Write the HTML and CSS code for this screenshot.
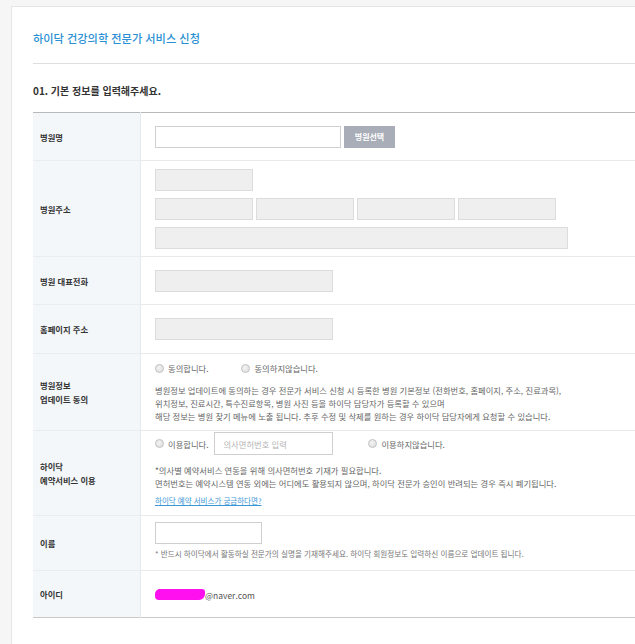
FILE: index.html
```html
<!DOCTYPE html>
<html lang="ko">
<head>
  <meta charset="UTF-8">
  <meta name="viewport" content="width=device-width, initial-scale=1.0">
  <title>하이닥 건강의학 전문가 서비스 신청</title>
  <link rel="stylesheet" href="styles.css">
</head>
<body>
  <div class="wrap">
    <div class="card">
      <h1 class="title">하이닥 건강의학 전문가 서비스 신청</h1>
      <hr class="line">
      <h2 class="step">01. 기본 정보를 입력해주세요.</h2>

      <table class="form">
        <tr class="r-name">
          <th>병원명</th>
          <td>
            <div class="inline">
              <input type="text" class="inp w-186">
              <button class="btn">병원선택</button>
            </div>
          </td>
        </tr>
        <tr class="r-addr">
          <th>병원주소</th>
          <td>
            <div class="addr">
              <span class="box w-98"></span>
              <div class="inline gap3">
                <span class="box w-98"></span>
                <span class="box w-98"></span>
                <span class="box w-98"></span>
                <span class="box w-98"></span>
              </div>
              <span class="box w-413"></span>
            </div>
          </td>
        </tr>
        <tr class="r-phone">
          <th>병원 대표전화</th>
          <td><span class="box w-178"></span></td>
        </tr>
        <tr class="r-home">
          <th>홈페이지 주소</th>
          <td><span class="box w-178"></span></td>
        </tr>
        <tr class="r-agree">
          <th>병원정보<br>업데이트 동의</th>
          <td>
            <div class="radios">
              <label class="radio"><span class="dot"></span>동의합니다.</label>
              <label class="radio"><span class="dot"></span>동의하지않습니다.</label>
            </div>
            <p class="desc">병원정보 업데이트에 동의하는 경우 전문가 서비스 신청 시 등록한 병원 기본정보 (전화번호, 홈페이지, 주소, 진료과목),<br>위치정보, 진료시간, 특수진료항목, 병원 사진 등을 하이닥 담당자가 등록할 수 있으며<br>해당 정보는 병원 찾기 메뉴에 노출 됩니다. 추후 수정 및 삭제를 원하는 경우 하이닥 담당자에게 요청할 수 있습니다.</p>
          </td>
        </tr>
        <tr class="r-resv">
          <th>하이닥<br>예약서비스 이용</th>
          <td>
            <div class="radios">
              <label class="radio"><span class="dot"></span>이용합니다.</label>
              <input type="text" class="inp lic" placeholder="의사면허번호 입력">
              <label class="radio"><span class="dot"></span>이용하지않습니다.</label>
            </div>
            <p class="desc">*의사별 예약서비스 연동을 위해 의사면허번호 기재가 필요합니다.<br>면허번호는 예약시스템 연동 외에는 어디에도 활용되지 않으며, 하이닥 전문가 승인이 반려되는 경우 즉시 폐기됩니다.</p>
            <a href="#" class="more">하이닥 예약 서비스가 궁금하다면?</a>
          </td>
        </tr>
        <tr class="r-user">
          <th>이름</th>
          <td>
            <input type="text" class="inp w-107">
            <p class="note">* 반드시 하이닥에서 활동하실 전문가의 실명을 기재해주세요. 하이닥 회원정보도 입력하신 이름으로 업데이트 됩니다.</p>
          </td>
        </tr>
        <tr class="r-id">
          <th>아이디</th>
          <td><span class="mask"></span><span class="mail">@naver.com</span></td>
        </tr>
      </table>
    </div>
  </div>
</body>
</html>
```

FILE: styles.css
```css
body { margin:0; background:#f6f6f6; font-family:"Noto Sans CJK KR","Noto Sans",sans-serif; color:#555; }
.wrap { padding:6px 0 0 11px; }
.card { background:#fff; border-left:1px solid #e6e6e6; border-top:1px solid #e6e6e6; padding:23px 0 40px 21px; min-height:600px; }

.title { margin:0; font-size:11.2px; line-height:16px; font-weight:500; color:#2a90d3; }
.line { margin:17px 0 0; border:none; border-top:1px solid #dedede; }
.step { margin:20px 0 0; font-size:10px; line-height:14px; font-weight:700; color:#333; }

.form { margin-top:14px; width:100%; border-collapse:collapse; border-top:1px solid #b9b9b9; border-bottom:1px solid #c9c9c9; }
.form th { width:100px; padding:0 0 0 7px; background:#f3f7fa; border-right:1px solid #e3e9ef; border-bottom:1px solid #e8edf1; text-align:left; font-size:8.3px; line-height:14px; font-weight:700; color:#333; }
.form td { padding:0 0 0 14px; border-bottom:1px solid #e9e9e9; vertical-align:middle; font-size:8.3px; }
.form tr:last-child th, .form tr:last-child td { border-bottom:none; }

.r-name th, .r-name td { height:47px; }
.r-addr th, .r-addr td { height:95px; }
.r-phone th, .r-phone td { height:47px; }
.r-home th, .r-home td { height:48px; }
.r-agree th, .r-agree td { height:76px; }
.r-resv th, .r-resv td { height:84px; }
.r-user th, .r-user td { height:54px; }
.r-id th, .r-id td { height:46px; }

.r-agree td { vertical-align:top; padding-top:7px; box-sizing:border-box; }
.r-resv td { vertical-align:top; padding-top:1px; box-sizing:border-box; }
.r-user td { vertical-align:top; padding-top:6px; box-sizing:border-box; }

.inline { display:flex; align-items:center; gap:3px; }
.gap3 { gap:3px; }
.addr { display:flex; flex-direction:column; gap:7px; }

.inp { box-sizing:border-box; height:22px; border:1px solid #cfcfcf; background:#fff; padding:0 8px; font-family:inherit; font-size:8.3px; color:#555; display:block; }
.inp::placeholder { color:#b3b3b3; }
.w-186 { width:186px; }
.w-107 { width:107px; }
.btn { height:22px; width:51px; border:none; background:#a9adb7; color:#fff; font-family:inherit; font-size:8px; font-weight:700; padding:0; }

.box { display:block; box-sizing:border-box; height:22px; background:#efefef; border:1px solid #dcdcdc; }
.w-98 { width:98px; }
.w-178 { width:178px; }
.w-413 { width:413px; }

.radios { display:flex; align-items:center; height:14px; color:#666; }
.r-resv .radios { height:23px; }
.radio { display:flex; align-items:center; gap:4px; margin-right:33px; }
.r-resv .radio { margin-right:6px; }
.r-resv .lic { width:119px; height:23px; margin-right:35px; }
.dot { width:7px; height:7px; border-radius:50%; border:1px solid #c4c4c4; background:radial-gradient(circle at 40% 40%, #f4f4f4, #d9d9d9); }

.desc { margin:9px 0 0; line-height:13px; color:#666; }
.more { display:block; width:max-content; margin-top:4px; line-height:13px; color:#3a97d6; font-size:7.5px; }
.note { margin:4px 0 0; font-size:7.6px; line-height:11px; color:#777; }

.mask { display:inline-block; width:50px; height:11px; border-radius:5px 3px 6px 4px; background:#ff10ee; vertical-align:middle; }
.mail { vertical-align:middle; color:#555; font-size:8.5px; }
```
